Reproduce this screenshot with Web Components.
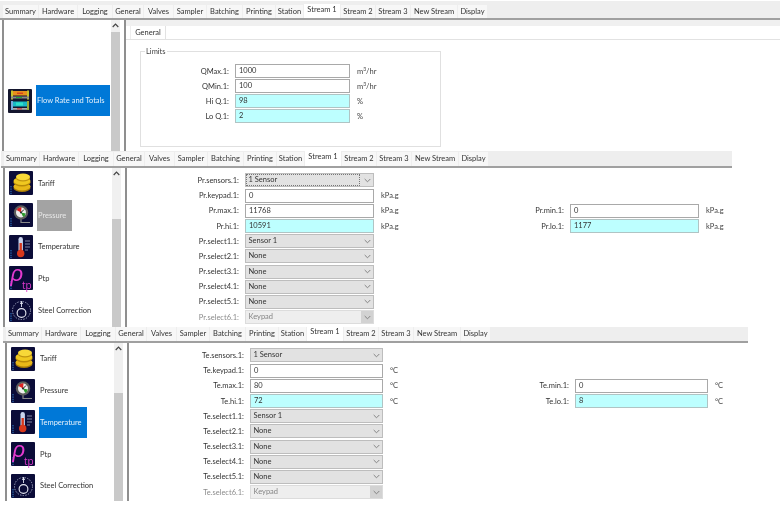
<!DOCTYPE html>
<html lang="en"><head><meta charset="utf-8"><title>Stream configuration</title>
<style>
html,body{margin:0;padding:0;background:#fff;width:780px;height:513px;overflow:hidden;font:7.5px Lato,"Open Sans",sans-serif;color:#333}
#p1{margin-top:1px;--body:131px;--strip-top:4px;--strip-h:17px;--list-pad:65px;--thumb:12px;width:780px}
#p2{margin-left:1px;width:731px;--body:159px;--strip-top:1px;--strip-h:15px;--list-pad:-0.5px;--row:31.7px;--thumb:51px;--l1:118px;--f:129px;--u:67px;--l2:129px;--form-top:4.9px}
#p3{margin-left:3px;width:745px;--body:158px;--strip-top:0px;--strip-h:14px;--list-pad:0px;--row:31.75px;--thumb:50px;--l1:121px;--f:133px;--u:67px;--l2:125px;--form-top:4.9px}
</style></head><body>
<hmi-panel id="p1" active="Stream 1">
  <side-list slot="list">
    <side-item icon="flow" state="blue">Flow Rate and Totals</side-item>
  </side-list>
  <sub-tabs>
    <group-box legend="Limits" style="--l1:94px;--f:115px;--u:60px;--l2:0px;--form-top:6.5px;--rowh:15px">
      <form-grid>
        <form-cell label="QMax.1:" value="1000" unit="m3"></form-cell>
        <form-cell label="QMin.1:" value="100" unit="m3"></form-cell>
        <form-cell label="Hi Q.1:" value="98" kind="cyan" unit="%"></form-cell>
        <form-cell label="Lo Q.1:" value="2" kind="cyan" unit="%"></form-cell>
      </form-grid>
    </group-box>
  </sub-tabs>
</hmi-panel>
<hmi-panel id="p2" active="Stream 1">
  <side-list slot="list">
    <side-item icon="coins">Tariff</side-item>
    <side-item icon="gauge" state="grey">Pressure</side-item>
    <side-item icon="thermo">Temperature</side-item>
    <side-item icon="ptp">Ptp</side-item>
    <side-item icon="steel">Steel Correction</side-item>
  </side-list>
  <form-grid>
    <form-cell label="Pr.sensors.1:" value="1 Sensor" kind="select" focus></form-cell>
    <form-cell label="Pr.keypad.1:" value="0" unit="kPa.g"></form-cell>
    <form-cell label="Pr.max.1:" value="11768" unit="kPa.g"></form-cell>
    <form-cell second label="Pr.min.1:" value="0" unit="kPa.g"></form-cell>
    <form-cell label="Pr.hi.1:" value="10591" kind="cyan" unit="kPa.g"></form-cell>
    <form-cell second label="Pr.lo.1:" value="1177" kind="cyan" unit="kPa.g"></form-cell>
    <form-cell label="Pr.select1.1:" value="Sensor 1" kind="select"></form-cell>
    <form-cell label="Pr.select2.1:" value="None" kind="select"></form-cell>
    <form-cell label="Pr.select3.1:" value="None" kind="select"></form-cell>
    <form-cell label="Pr.select4.1:" value="None" kind="select"></form-cell>
    <form-cell label="Pr.select5.1:" value="None" kind="select"></form-cell>
    <form-cell label="Pr.select6.1:" value="Keypad" kind="disabled"></form-cell>
  </form-grid>
</hmi-panel>
<hmi-panel id="p3" active="Stream 1">
  <side-list slot="list">
    <side-item icon="coins">Tariff</side-item>
    <side-item icon="gauge">Pressure</side-item>
    <side-item icon="thermo" state="blue">Temperature</side-item>
    <side-item icon="ptp">Ptp</side-item>
    <side-item icon="steel">Steel Correction</side-item>
  </side-list>
  <form-grid>
    <form-cell label="Te.sensors.1:" value="1 Sensor" kind="select"></form-cell>
    <form-cell label="Te.keypad.1:" value="0" unit="°C"></form-cell>
    <form-cell label="Te.max.1:" value="80" unit="°C"></form-cell>
    <form-cell second label="Te.min.1:" value="0" unit="°C"></form-cell>
    <form-cell label="Te.hi.1:" value="72" kind="cyan" unit="°C"></form-cell>
    <form-cell second label="Te.lo.1:" value="8" kind="cyan" unit="°C"></form-cell>
    <form-cell label="Te.select1.1:" value="Sensor 1" kind="select"></form-cell>
    <form-cell label="Te.select2.1:" value="None" kind="select"></form-cell>
    <form-cell label="Te.select3.1:" value="None" kind="select"></form-cell>
    <form-cell label="Te.select4.1:" value="None" kind="select"></form-cell>
    <form-cell label="Te.select5.1:" value="None" kind="select"></form-cell>
    <form-cell label="Te.select6.1:" value="Keypad" kind="disabled"></form-cell>
  </form-grid>
</hmi-panel>
<script>
const FONT='Lato,"Open Sans",sans-serif';
const FS='7.5px';
const TABS=[['Summary',35],['Hardware',38],['Logging',34],['General',30],['Valves',29],['Sampler',32],['Batching',35],['Printing',32],['Station',27],['Stream 1',36],['Stream 2',34],['Stream 3',34],['New Stream',46],['Display',29]];
const dots='<g fill="#2f7fd0"><rect x="1.5" y="15" width="1" height="1.4"/><rect x="1.5" y="17.4" width="1" height="1.4"/><rect x="1.5" y="19.8" width="1" height="1.4"/><rect x="1.5" y="22" width="1" height="1.2"/></g>';
const ICONS={
flow:`<rect width="24" height="24" rx="1" fill="#14162e"/><rect x="3" y="2" width="18" height="4.5" fill="#e8901c"/><rect x="3" y="1.5" width="2" height="9" fill="#c9c22a"/><rect x="19" y="1.5" width="2" height="9" fill="#c9c22a"/><path d="M9 4.2h6" stroke="#c22" stroke-width="1"/><rect x="3" y="7.5" width="18" height="2" fill="#888"/><rect x="8" y="8" width="6" height="1" fill="#2a3"/><rect x="3" y="12.5" width="18" height="5" fill="#19b8c4"/><rect x="3" y="12" width="2" height="9" fill="#7ad"/><rect x="19" y="12" width="2" height="9" fill="#9a3"/><rect x="8" y="13.5" width="7" height="3" fill="#2fe0c8"/><rect x="5" y="19" width="14" height="1.8" fill="#aaa"/><rect x="9" y="19.3" width="5" height="1.1" fill="#c33"/>`,
coins:`<rect width="24" height="24" rx="1" fill="#0b0c38"/>${dots}<ellipse cx="13" cy="17" rx="8.5" ry="4" fill="#a87c08"/><ellipse cx="13" cy="15.5" rx="8.5" ry="4" fill="#e8b818"/><ellipse cx="13" cy="11.5" rx="8.5" ry="4" fill="#b88a08"/><ellipse cx="13" cy="10" rx="8.5" ry="4" fill="#f0c820"/><ellipse cx="14" cy="7" rx="7" ry="3.6" fill="#c09410"/><ellipse cx="14" cy="5.8" rx="7" ry="3.4" fill="#f8d838"/>`,
gauge:`<rect width="24" height="24" rx="1" fill="#0b0c38"/>${dots}<path d="M12 16v3.5h9" fill="none" stroke="#8a8a8a" stroke-width="1.2"/><circle cx="12" cy="9.5" r="7.2" fill="#5c5c5c"/><circle cx="12" cy="9.5" r="5" fill="#eee"/><path d="M7.5 7a5 5 0 0 1 5-2.6L12 9.5z" fill="#d22"/><path d="M12 9.5l4.8 1a5 5 0 0 1-2.6 3.4z" fill="#2a9a2a"/><path d="M12 9.5l3-3" stroke="#222" stroke-width="1"/><circle cx="12" cy="9.5" r="1.1" fill="#333"/>`,
thermo:`<rect width="24" height="24" rx="1" fill="#0b0c38"/>${dots}<rect x="9.5" y="2" width="4.4" height="15" rx="2.2" fill="#c9d3ee"/><rect x="10.5" y="8" width="2.4" height="10" fill="#d8381c"/><circle cx="11.7" cy="18.5" r="3.7" fill="#d8381c"/><g stroke="#8d93b0" stroke-width=".9"><path d="M16 6h5M16 9h5M16 12h5M16 15h3"/></g>`,
ptp:`<rect width="24" height="24" rx="1" fill="#0b0c38"/>${dots}<text x="1.5" y="15" font-family="'Liberation Sans',sans-serif" font-style="italic" font-size="22" fill="#e43ad0">ρ</text><text x="13" y="22.5" font-family="'Open Sans',sans-serif" font-size="10" fill="#e43ad0">tp</text>`,
steel:`<rect width="24" height="24" rx="1" fill="#0b0c38"/>${dots}<circle cx="12.5" cy="15" r="4.4" fill="none" stroke="#e8eaf4" stroke-width="1.1"/><path d="M12.5 3v6" stroke="#dfe2f0" stroke-width=".9"/><path d="M10.9 6l1.6-3 1.6 3z" fill="#dfe2f0"/><circle cx="12.5" cy="12.5" r="9" fill="none" stroke="#aeb3cc" stroke-width=".9" stroke-dasharray="1.4 1.3"/>`
};
function shadow(el,html){const r=el.attachShadow({mode:'open'});r.innerHTML=html;return r;}

class HmiPanel extends HTMLElement{
  constructor(){super();
    shadow(this,`<style>
    :host{display:block;filter:blur(.35px)}
    .body{display:flex;height:var(--body);overflow:hidden;background:#fff}
    .list{width:122px;flex:none;margin-left:2px;display:flex}
    .content{flex:1;min-width:0;border-left:2px solid #8f8f8f}
    </style>
    <tab-strip></tab-strip>
    <div class="body"><div class="list"><slot name="list"></slot></div><div class="content"><slot></slot></div></div>`);
  }
  connectedCallback(){this.shadowRoot.querySelector('tab-strip').setAttribute('active',this.getAttribute('active'));}
}
class TabStrip extends HTMLElement{
  constructor(){super();this.root=shadow(this,`<style>
    :host{display:flex;box-sizing:content-box;height:var(--strip-h);padding-left:3px;gap:1px;background:#eeeeee;border-bottom:2px solid #a0a0a0;align-items:flex-end;font:${FS} ${FONT};color:#333}
    .t{box-sizing:border-box;height:calc(var(--strip-h) - var(--strip-top));text-align:center;background:#f7f7f7;line-height:14px;white-space:nowrap;flex:none}
    .t.on{background:#fff;line-height:12px;margin-top:-1px;height:calc(var(--strip-h) - var(--strip-top) + 1px);padding-bottom:2px}
    </style><span id="x"></span>`);}
  connectedCallback(){this.render();}
  static get observedAttributes(){return['active'];}
  attributeChangedCallback(){this.render();}
  render(){const a=this.getAttribute('active');const x=this.root.getElementById('x');if(x)x.remove();this.root.querySelectorAll('.t').forEach(e=>e.remove());
    TABS.forEach(([n,w])=>{const d=document.createElement('div');d.className='t'+(n===a?' on':'');d.style.width=w+'px';d.textContent=n;this.root.appendChild(d);});}
}
class SideList extends HTMLElement{
  constructor(){super();shadow(this,`<style>
    :host{display:flex;flex:1;min-width:0;height:100%}
    .box{width:107px;flex:none;border-left:2px solid #8f8f8f;box-sizing:border-box;display:flex;flex-direction:column}
    .in{margin-top:var(--list-pad);display:flex;flex-direction:column}
    </style><div class="box"><div class="in"><slot></slot></div></div><scroll-bar></scroll-bar>`);}
}
class ScrollBar extends HTMLElement{
  constructor(){super();shadow(this,`<style>
    :host{display:flex;flex-direction:column;width:9px;margin-left:2px;flex:none;height:100%;background:#f0f0f0}
    .up{height:12px;display:flex;justify-content:center;padding-top:3px;box-sizing:border-box;flex:none}
    .gap{height:var(--thumb);margin-top:-12px;flex:none}
    .thumb{flex:1;background:#c9c9c9}
    </style><div class="up"><svg width="7" height="5" viewBox="0 0 7 5"><path d="M.7 4L3.5 1.2 6.3 4" fill="none" stroke="#444" stroke-width="1.2"/></svg></div><div class="gap"></div><div class="thumb"></div>`);}
}
class SideItem extends HTMLElement{
  constructor(){super();shadow(this,`<style>
    :host{display:flex;align-items:center;height:var(--row,31px);flex:none;font:${FS} ${FONT};color:#333;white-space:nowrap}
    svg{width:24px;height:24px;margin-left:4px;flex:none;overflow:visible}
    .l{margin-left:4px;padding:0 1px;height:31px;line-height:31px;flex:none}
    :host([state=blue]) .l{background:#0078d7;color:#e4f0fb;padding-right:5px}
    :host([state=grey]) .l{background:#a3a3a3;color:#e8e8e8;padding-right:6px}
    </style><svg viewBox="0 0 24 24"></svg><span class="l"><slot></slot></span>`);}
  connectedCallback(){this.shadowRoot.querySelector('svg').innerHTML=ICONS[this.getAttribute('icon')];}
}
class SubTabs extends HTMLElement{
  constructor(){super();shadow(this,`<style>
    :host{display:block;font:${FS} ${FONT};color:#333}
    .strip{height:6px;background:#f0f0f0}
    .row{height:13px;border-bottom:1px solid #e2e2e2;padding-left:5px}
    .tab{display:block;width:34px;height:13px;line-height:13px;text-align:center;background:#fff;box-shadow:1px 0 0 #e2e2e2,-1px 0 0 #eee}
    </style><div class="strip"></div><div class="row"><span class="tab">General</span></div><slot></slot>`);}
}
class GroupBox extends HTMLElement{
  constructor(){super();this.r=shadow(this,`<style>
    :host{display:block;font:${FS} ${FONT};color:#444;margin:6px 0 0 14px;width:301px}
    fieldset{margin:0;padding:0;box-sizing:border-box;height:101px;border:1px solid #e0e0e0;min-width:0}
    legend{margin-left:4px;padding:0 1px;line-height:11px;height:11px}
    </style><fieldset><legend></legend><slot></slot></fieldset>`);}
  connectedCallback(){this.r.querySelector('legend').textContent=this.getAttribute('legend');}
}
class FormGrid extends HTMLElement{
  constructor(){super();shadow(this,`<style>
    :host{display:grid;grid-template-columns:calc(var(--l1) + var(--f) + var(--u)) 1fr;grid-auto-rows:var(--rowh,15.2px);padding-top:var(--form-top);font:${FS} ${FONT};color:#333}
    </style><slot></slot>`);}
}
class FormCell extends HTMLElement{
  constructor(){super();this.r=shadow(this,`<style>
    :host{display:flex;align-items:center;grid-column:1;white-space:nowrap;min-width:0}
    :host([second]){grid-column:2}
    .lab{width:var(--l1);box-sizing:border-box;padding-right:6px;text-align:right;flex:none}
    :host([second]) .lab{width:var(--l2)}
    :host([kind=disabled]) .lab{color:#8c8c8c}
    .f{width:var(--f);height:14px;box-sizing:border-box;flex:none;border:1px solid #a9a9a9;background:#fff;padding:0 0 0 3px;line-height:12px;display:flex;align-items:center;position:relative}
    :host([kind=cyan]) .f{background:#bdffff;border-color:#b0c4c4}
    :host([kind=select]) .f{background:#e2e2e2;border-color:#bdbdbd;padding-left:2.5px}
    :host([kind=disabled]) .f{background:#eeeeee;border-color:#dcdcdc;color:#858585;padding-left:2.5px}
    .v{flex:1;min-width:0}
    .arr{width:12px;height:100%;display:none;align-items:center;justify-content:center;flex:none}
    :host([kind=select]) .arr,:host([kind=disabled]) .arr{display:flex}
    :host([kind=disabled]) .arr{background:#d2d2d2}
    .arr svg{display:block}
    :host([focus]) .f{padding-left:0}
    :host([focus]) .v{outline:1px dotted #777;outline-offset:-1px;align-self:stretch;padding-left:2.5px;line-height:12px}
    :host([focus]) .arr{margin-left:1px}
    .u{padding-left:7px;color:#444;flex:none}
    sup{font-size:5px;line-height:0;vertical-align:3px}
    </style><span class="lab"></span><div class="f"><span class="v"></span><span class="arr"><svg width="7" height="5" viewBox="0 0 7 5"><path d="M.7 1L3.5 3.8 6.3 1" fill="none" stroke="#7a7a7a" stroke-width=".9"/></svg></span></div><span class="u"></span>`);}
  connectedCallback(){
    this.r.querySelector('.lab').textContent=this.getAttribute('label');
    this.r.querySelector('.v').textContent=this.getAttribute('value');
    const u=this.getAttribute('unit')||'';const e=this.r.querySelector('.u');
    if(u==='m3'){e.innerHTML='m<sup>3</sup>/hr';}else e.textContent=u;
  }
}
customElements.define('tab-strip',TabStrip);
customElements.define('scroll-bar',ScrollBar);
customElements.define('side-list',SideList);
customElements.define('side-item',SideItem);
customElements.define('sub-tabs',SubTabs);
customElements.define('group-box',GroupBox);
customElements.define('form-grid',FormGrid);
customElements.define('form-cell',FormCell);
customElements.define('hmi-panel',HmiPanel);
</script>
</body></html>
